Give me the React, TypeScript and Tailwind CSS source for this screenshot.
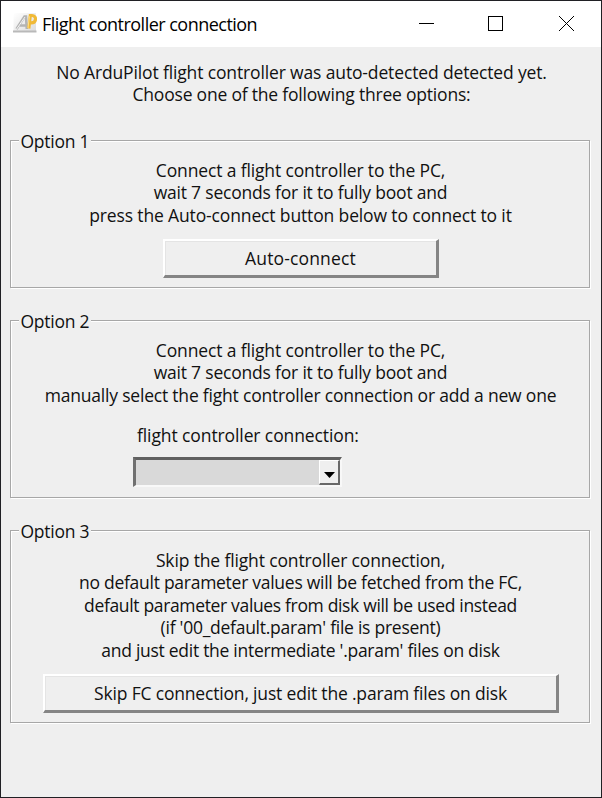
import type { ReactNode } from "react";

function Line({ children, className = "" }: { children: ReactNode; className?: string }) {
  return <div className={`whitespace-pre pl-px text-center ${className}`}>{children}</div>;
}

function Group({ title, className, children }: { title: string; className: string; children: ReactNode }) {
  return (
    <section
      className={`ml-[9px] flex w-[580px] flex-col border border-[#a7a7a7] shadow-[1px_1px_0_#fff,inset_1px_1px_0_#fff] ${className}`}
    >
      <h2 className="-mt-[11.5px] ml-2 h-[22.5px] w-[72px] self-start whitespace-nowrap bg-[#efefef] pl-[1.5px] tracking-[-0.24px]">{title}</h2>
      {children}
    </section>
  );
}

function RaisedButton({ className, children }: { className: string; children: ReactNode }) {
  return (
    <button
      className={`h-[39px] shrink-0 whitespace-nowrap border-t-2 border-r-[3px] border-b-[3px] border-l-2 border-t-white border-r-[#858585] border-b-[#858585] border-l-white pt-0.5 text-center shadow-[inset_1px_1px_0_#e4e4e4] ${className}`}
    >
      {children}
    </button>
  );
}

function AppIcon() {
  return (
    <svg className="ml-3 h-6 w-6 shrink-0" viewBox="0 0 24 24" fill="none">
      <defs>
        <linearGradient id="plate" x1="0" y1="0" x2="1" y2="1">
          <stop offset="0" stopColor="#ffffff" />
          <stop offset="1" stopColor="#c4c4c4" />
        </linearGradient>
      </defs>
      <path d="M0.5 1H23v19H0.5z" fill="url(#plate)" opacity=".6" />
      <path d="M0 18.5h23.5v2H0z" fill="#b9b9b9" />
      <path d="M3.5 17 11.5 4.5H13l.8 12.5M7 13.5h7" stroke="#b4b4b4" strokeWidth="2.6" />
      <path d="M3.7 17 12 5" stroke="#f4f4f4" strokeWidth="1" />
      <path d="M15.8 16.5 17.3 3.5h1.7c5 0 4.6 7.4-.6 7.4h-1.6" stroke="#f0b936" strokeWidth="3.2" />
      <path d="M16.4 4.3 15 16" stroke="#ffe08a" strokeWidth="1" />
    </svg>
  );
}

export default function App() {
  return (
    <main className="flex h-[798px] w-[602px] flex-col border border-[#202024] bg-[#efefef] font-['Open_Sans','Noto_Sans',sans-serif] text-[17.5px] leading-[22.5px] tracking-[-0.14px] text-[#111]">
      <header className="flex h-[46px] shrink-0 items-center bg-white text-black">
        <AppIcon />
        <h1 className="ml-[5px] w-[360px] whitespace-nowrap text-[18px] tracking-[-0.52px]">Flight controller connection</h1>
        <svg className="ml-[17px] h-[15px] w-[156px] shrink-0 -translate-y-px" viewBox="0 0 156 15" fill="none" stroke="#000" shapeRendering="crispEdges">
          <path d="M0 7.5h15M69.5.5h14v14h-14z" />
          <path d="m140 0 15 15m0-15-15 15" shapeRendering="auto" strokeWidth="1" />
        </svg>
      </header>

      <div className="mt-[13.5px] h-[45.5px]">
        <Line>No ArduPilot flight controller was auto-detected detected yet.</Line>
        <Line className="tracking-[-0.2px]">Choose one of the following three options:</Line>
      </div>

      <Group title="Option 1" className="mt-[34px] h-[148px]">
        <div className="mt-[6.5px] mb-[12.5px]">
          <Line>Connect a flight controller to the PC,</Line>
          <Line className="tracking-[-0.2px]">wait 7 seconds for it to fully boot and</Line>
          <Line>press the Auto-connect button below to connect to it</Line>
        </div>
        <RaisedButton className="ml-[152px] w-[276px] tracking-[0.15px]">Auto-connect</RaisedButton>
      </Group>

      <Group title="Option 2" className="mt-8 h-[178px]">
        <div className="mt-[6.5px] h-[68px]">
          <Line>Connect a flight controller to the PC,</Line>
          <Line className="tracking-[-0.2px]">wait 7 seconds for it to fully boot and</Line>
          <Line className="tracking-[-0.2px]">manually select the fight controller connection or add a new one</Line>
        </div>
        <label className="mt-[17.5px] ml-[126px] whitespace-nowrap tracking-[-0.1px]">flight controller connection:</label>
        <div className="mt-[10px] ml-[122px] flex h-[30px] w-[209px] justify-end border-t-[3px] border-r-2 border-b-2 border-l-[3px] border-t-[#606060] border-r-[#f8f8f8] border-b-[#f8f8f8] border-l-[#707070] bg-[#d9d9d9]">
          <button className="flex h-[25px] w-[21px] items-center justify-center border-t border-r-2 border-b-2 border-l border-t-white border-r-[#686868] border-b-[#686868] border-l-white bg-[#efefef] pt-1.5">
            <svg className="h-[6px] w-[11px]" viewBox="0 0 11 6">
              <path d="M0 0h11L5.5 6z" fill="#000" />
            </svg>
          </button>
        </div>
      </Group>

      <Group title="Option 3" className="mt-8 h-[193px]">
        <div className="mt-[6.5px] mb-[12.5px]">
          <Line>Skip the flight controller connection,</Line>
          <Line className="tracking-[-0.27px]">no default parameter values will be fetched from the FC,</Line>
          <Line className="tracking-[-0.34px]">default parameter values from disk will be used instead</Line>
          <Line className="tracking-[-0.26px]">(if '00_default.param' file is present)</Line>
          <Line className="tracking-[-0.28px]">and just edit the intermediate '.param' files on disk</Line>
        </div>
        <RaisedButton className="ml-8 w-[516px] tracking-[-0.18px]">Skip FC connection, just edit the .param files on disk</RaisedButton>
      </Group>
    </main>
  );
}
